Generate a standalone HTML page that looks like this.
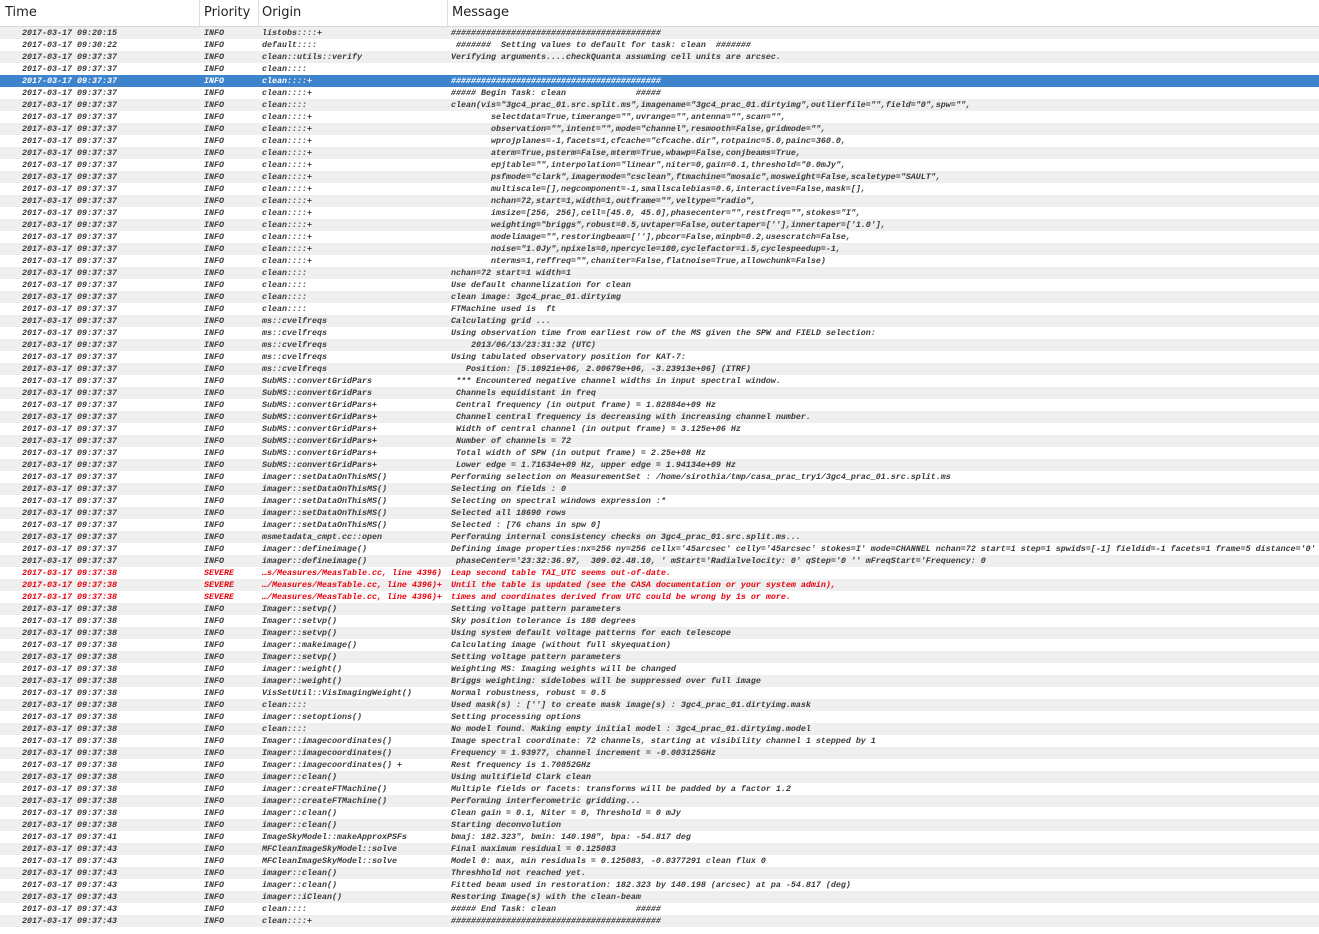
<!DOCTYPE html>
<html><head><meta charset="utf-8"><style>
body{margin:0;width:1319px;height:934px;background:#fff;overflow:hidden;font-family:"Liberation Mono",monospace;}
.h{height:26px;border-bottom:1px solid #d8d8d8;position:relative;font-family:"DejaVu Sans","Liberation Sans",sans-serif;font-size:13px;color:#222;background:#fff}
.h span{position:absolute;top:5px}
.h i{position:absolute;top:0;height:26px;width:1px;background:#ddd}
.r{height:12px;position:relative;font-size:8.33px;font-style:italic;font-weight:bold;line-height:12px;color:#3a3a3a;white-space:pre;overflow:hidden}
.r:nth-child(odd){background:#efefef}
.r span{position:absolute;top:0;overflow:hidden}
.r span:nth-child(1){left:22px}
.r span:nth-child(2){left:204px}
.r span:nth-child(3){left:262px;width:185px}
.r span:nth-child(4){left:451px}
.r.s{background:#3d84cd!important;color:#fff}
.r.e{color:#e8000b}
</style></head><body>
<div class="h"><span style="left:5px">Time</span><i style="left:199px"></i><span style="left:204px">Priority</span><i style="left:258px"></i><span style="left:262px">Origin</span><i style="left:447px"></i><span style="left:452px">Message</span></div>
<div id="t">
<div class="r"><span>2017-03-17 09:20:15</span><span>INFO</span><span>listobs::::+</span><span>##########################################</span></div>
<div class="r"><span>2017-03-17 09:30:22</span><span>INFO</span><span>default::::</span><span> #######  Setting values to default for task: clean  #######</span></div>
<div class="r"><span>2017-03-17 09:37:37</span><span>INFO</span><span>clean::utils::verify</span><span>Verifying arguments....checkQuanta assuming cell units are arcsec.</span></div>
<div class="r"><span>2017-03-17 09:37:37</span><span>INFO</span><span>clean::::</span><span></span></div>
<div class="r s"><span>2017-03-17 09:37:37</span><span>INFO</span><span>clean::::+</span><span>##########################################</span></div>
<div class="r"><span>2017-03-17 09:37:37</span><span>INFO</span><span>clean::::+</span><span>##### Begin Task: clean              #####</span></div>
<div class="r"><span>2017-03-17 09:37:37</span><span>INFO</span><span>clean::::</span><span>clean(vis="3gc4_prac_01.src.split.ms",imagename="3gc4_prac_01.dirtyimg",outlierfile="",field="0",spw="",</span></div>
<div class="r"><span>2017-03-17 09:37:37</span><span>INFO</span><span>clean::::+</span><span>        selectdata=True,timerange="",uvrange="",antenna="",scan="",</span></div>
<div class="r"><span>2017-03-17 09:37:37</span><span>INFO</span><span>clean::::+</span><span>        observation="",intent="",mode="channel",resmooth=False,gridmode="",</span></div>
<div class="r"><span>2017-03-17 09:37:37</span><span>INFO</span><span>clean::::+</span><span>        wprojplanes=-1,facets=1,cfcache="cfcache.dir",rotpainc=5.0,painc=360.0,</span></div>
<div class="r"><span>2017-03-17 09:37:37</span><span>INFO</span><span>clean::::+</span><span>        aterm=True,psterm=False,mterm=True,wbawp=False,conjbeams=True,</span></div>
<div class="r"><span>2017-03-17 09:37:37</span><span>INFO</span><span>clean::::+</span><span>        epjtable="",interpolation="linear",niter=0,gain=0.1,threshold="0.0mJy",</span></div>
<div class="r"><span>2017-03-17 09:37:37</span><span>INFO</span><span>clean::::+</span><span>        psfmode="clark",imagermode="csclean",ftmachine="mosaic",mosweight=False,scaletype="SAULT",</span></div>
<div class="r"><span>2017-03-17 09:37:37</span><span>INFO</span><span>clean::::+</span><span>        multiscale=[],negcomponent=-1,smallscalebias=0.6,interactive=False,mask=[],</span></div>
<div class="r"><span>2017-03-17 09:37:37</span><span>INFO</span><span>clean::::+</span><span>        nchan=72,start=1,width=1,outframe="",veltype="radio",</span></div>
<div class="r"><span>2017-03-17 09:37:37</span><span>INFO</span><span>clean::::+</span><span>        imsize=[256, 256],cell=[45.0, 45.0],phasecenter="",restfreq="",stokes="I",</span></div>
<div class="r"><span>2017-03-17 09:37:37</span><span>INFO</span><span>clean::::+</span><span>        weighting="briggs",robust=0.5,uvtaper=False,outertaper=[''],innertaper=['1.0'],</span></div>
<div class="r"><span>2017-03-17 09:37:37</span><span>INFO</span><span>clean::::+</span><span>        modelimage="",restoringbeam=[''],pbcor=False,minpb=0.2,usescratch=False,</span></div>
<div class="r"><span>2017-03-17 09:37:37</span><span>INFO</span><span>clean::::+</span><span>        noise="1.0Jy",npixels=0,npercycle=100,cyclefactor=1.5,cyclespeedup=-1,</span></div>
<div class="r"><span>2017-03-17 09:37:37</span><span>INFO</span><span>clean::::+</span><span>        nterms=1,reffreq="",chaniter=False,flatnoise=True,allowchunk=False)</span></div>
<div class="r"><span>2017-03-17 09:37:37</span><span>INFO</span><span>clean::::</span><span>nchan=72 start=1 width=1</span></div>
<div class="r"><span>2017-03-17 09:37:37</span><span>INFO</span><span>clean::::</span><span>Use default channelization for clean</span></div>
<div class="r"><span>2017-03-17 09:37:37</span><span>INFO</span><span>clean::::</span><span>clean image: 3gc4_prac_01.dirtyimg</span></div>
<div class="r"><span>2017-03-17 09:37:37</span><span>INFO</span><span>clean::::</span><span>FTMachine used is  ft</span></div>
<div class="r"><span>2017-03-17 09:37:37</span><span>INFO</span><span>ms::cvelfreqs</span><span>Calculating grid ...</span></div>
<div class="r"><span>2017-03-17 09:37:37</span><span>INFO</span><span>ms::cvelfreqs</span><span>Using observation time from earliest row of the MS given the SPW and FIELD selection:</span></div>
<div class="r"><span>2017-03-17 09:37:37</span><span>INFO</span><span>ms::cvelfreqs</span><span>    2013/06/13/23:31:32 (UTC)</span></div>
<div class="r"><span>2017-03-17 09:37:37</span><span>INFO</span><span>ms::cvelfreqs</span><span>Using tabulated observatory position for KAT-7:</span></div>
<div class="r"><span>2017-03-17 09:37:37</span><span>INFO</span><span>ms::cvelfreqs</span><span>   Position: [5.10921e+06, 2.00679e+06, -3.23913e+06] (ITRF)</span></div>
<div class="r"><span>2017-03-17 09:37:37</span><span>INFO</span><span>SubMS::convertGridPars</span><span> *** Encountered negative channel widths in input spectral window.</span></div>
<div class="r"><span>2017-03-17 09:37:37</span><span>INFO</span><span>SubMS::convertGridPars</span><span> Channels equidistant in freq</span></div>
<div class="r"><span>2017-03-17 09:37:37</span><span>INFO</span><span>SubMS::convertGridPars+</span><span> Central frequency (in output frame) = 1.82884e+09 Hz</span></div>
<div class="r"><span>2017-03-17 09:37:37</span><span>INFO</span><span>SubMS::convertGridPars+</span><span> Channel central frequency is decreasing with increasing channel number.</span></div>
<div class="r"><span>2017-03-17 09:37:37</span><span>INFO</span><span>SubMS::convertGridPars+</span><span> Width of central channel (in output frame) = 3.125e+06 Hz</span></div>
<div class="r"><span>2017-03-17 09:37:37</span><span>INFO</span><span>SubMS::convertGridPars+</span><span> Number of channels = 72</span></div>
<div class="r"><span>2017-03-17 09:37:37</span><span>INFO</span><span>SubMS::convertGridPars+</span><span> Total width of SPW (in output frame) = 2.25e+08 Hz</span></div>
<div class="r"><span>2017-03-17 09:37:37</span><span>INFO</span><span>SubMS::convertGridPars+</span><span> Lower edge = 1.71634e+09 Hz, upper edge = 1.94134e+09 Hz</span></div>
<div class="r"><span>2017-03-17 09:37:37</span><span>INFO</span><span>imager::setDataOnThisMS()</span><span>Performing selection on MeasurementSet : /home/sirothia/tmp/casa_prac_try1/3gc4_prac_01.src.split.ms</span></div>
<div class="r"><span>2017-03-17 09:37:37</span><span>INFO</span><span>imager::setDataOnThisMS()</span><span>Selecting on fields : 0</span></div>
<div class="r"><span>2017-03-17 09:37:37</span><span>INFO</span><span>imager::setDataOnThisMS()</span><span>Selecting on spectral windows expression :*</span></div>
<div class="r"><span>2017-03-17 09:37:37</span><span>INFO</span><span>imager::setDataOnThisMS()</span><span>Selected all 18690 rows</span></div>
<div class="r"><span>2017-03-17 09:37:37</span><span>INFO</span><span>imager::setDataOnThisMS()</span><span>Selected : [76 chans in spw 0]</span></div>
<div class="r"><span>2017-03-17 09:37:37</span><span>INFO</span><span>msmetadata_cmpt.cc::open</span><span>Performing internal consistency checks on 3gc4_prac_01.src.split.ms...</span></div>
<div class="r"><span>2017-03-17 09:37:37</span><span>INFO</span><span>imager::defineimage()</span><span>Defining image properties:nx=256 ny=256 cellx='45arcsec' celly='45arcsec' stokes=I' mode=CHANNEL nchan=72 start=1 step=1 spwids=[-1] fieldid=-1 facets=1 frame=5 distance='0'</span></div>
<div class="r"><span>2017-03-17 09:37:37</span><span>INFO</span><span>imager::defineimage()</span><span> phaseCenter='23:32:36.97,  309.02.48.10, ' mStart='Radialvelocity: 0' qStep='0 '' mFreqStart='Frequency: 0</span></div>
<div class="r e"><span>2017-03-17 09:37:38</span><span>SEVERE</span><span>…s/Measures/MeasTable.cc, line 4396)</span><span>Leap second table TAI_UTC seems out-of-date.</span></div>
<div class="r e"><span>2017-03-17 09:37:38</span><span>SEVERE</span><span>…/Measures/MeasTable.cc, line 4396)+</span><span>Until the table is updated (see the CASA documentation or your system admin),</span></div>
<div class="r e"><span>2017-03-17 09:37:38</span><span>SEVERE</span><span>…/Measures/MeasTable.cc, line 4396)+</span><span>times and coordinates derived from UTC could be wrong by 1s or more.</span></div>
<div class="r"><span>2017-03-17 09:37:38</span><span>INFO</span><span>Imager::setvp()</span><span>Setting voltage pattern parameters</span></div>
<div class="r"><span>2017-03-17 09:37:38</span><span>INFO</span><span>Imager::setvp()</span><span>Sky position tolerance is 180 degrees</span></div>
<div class="r"><span>2017-03-17 09:37:38</span><span>INFO</span><span>Imager::setvp()</span><span>Using system default voltage patterns for each telescope</span></div>
<div class="r"><span>2017-03-17 09:37:38</span><span>INFO</span><span>imager::makeimage()</span><span>Calculating image (without full skyequation)</span></div>
<div class="r"><span>2017-03-17 09:37:38</span><span>INFO</span><span>Imager::setvp()</span><span>Setting voltage pattern parameters</span></div>
<div class="r"><span>2017-03-17 09:37:38</span><span>INFO</span><span>imager::weight()</span><span>Weighting MS: Imaging weights will be changed</span></div>
<div class="r"><span>2017-03-17 09:37:38</span><span>INFO</span><span>imager::weight()</span><span>Briggs weighting: sidelobes will be suppressed over full image</span></div>
<div class="r"><span>2017-03-17 09:37:38</span><span>INFO</span><span>VisSetUtil::VisImagingWeight()</span><span>Normal robustness, robust = 0.5</span></div>
<div class="r"><span>2017-03-17 09:37:38</span><span>INFO</span><span>clean::::</span><span>Used mask(s) : [''] to create mask image(s) : 3gc4_prac_01.dirtyimg.mask</span></div>
<div class="r"><span>2017-03-17 09:37:38</span><span>INFO</span><span>imager::setoptions()</span><span>Setting processing options</span></div>
<div class="r"><span>2017-03-17 09:37:38</span><span>INFO</span><span>clean::::</span><span>No model found. Making empty initial model : 3gc4_prac_01.dirtyimg.model</span></div>
<div class="r"><span>2017-03-17 09:37:38</span><span>INFO</span><span>Imager::imagecoordinates()</span><span>Image spectral coordinate: 72 channels, starting at visibility channel 1 stepped by 1</span></div>
<div class="r"><span>2017-03-17 09:37:38</span><span>INFO</span><span>Imager::imagecoordinates()</span><span>Frequency = 1.93977, channel increment = -0.003125GHz</span></div>
<div class="r"><span>2017-03-17 09:37:38</span><span>INFO</span><span>Imager::imagecoordinates() +</span><span>Rest frequency is 1.70852GHz</span></div>
<div class="r"><span>2017-03-17 09:37:38</span><span>INFO</span><span>imager::clean()</span><span>Using multifield Clark clean</span></div>
<div class="r"><span>2017-03-17 09:37:38</span><span>INFO</span><span>imager::createFTMachine()</span><span>Multiple fields or facets: transforms will be padded by a factor 1.2</span></div>
<div class="r"><span>2017-03-17 09:37:38</span><span>INFO</span><span>imager::createFTMachine()</span><span>Performing interferometric gridding...</span></div>
<div class="r"><span>2017-03-17 09:37:38</span><span>INFO</span><span>imager::clean()</span><span>Clean gain = 0.1, Niter = 0, Threshold = 0 mJy</span></div>
<div class="r"><span>2017-03-17 09:37:38</span><span>INFO</span><span>imager::clean()</span><span>Starting deconvolution</span></div>
<div class="r"><span>2017-03-17 09:37:41</span><span>INFO</span><span>ImageSkyModel::makeApproxPSFs</span><span>bmaj: 182.323", bmin: 140.198", bpa: -54.817 deg</span></div>
<div class="r"><span>2017-03-17 09:37:43</span><span>INFO</span><span>MFCleanImageSkyModel::solve</span><span>Final maximum residual = 0.125083</span></div>
<div class="r"><span>2017-03-17 09:37:43</span><span>INFO</span><span>MFCleanImageSkyModel::solve</span><span>Model 0: max, min residuals = 0.125083, -0.0377291 clean flux 0</span></div>
<div class="r"><span>2017-03-17 09:37:43</span><span>INFO</span><span>imager::clean()</span><span>Threshhold not reached yet.</span></div>
<div class="r"><span>2017-03-17 09:37:43</span><span>INFO</span><span>imager::clean()</span><span>Fitted beam used in restoration: 182.323 by 140.198 (arcsec) at pa -54.817 (deg)</span></div>
<div class="r"><span>2017-03-17 09:37:43</span><span>INFO</span><span>imager::iClean()</span><span>Restoring Image(s) with the clean-beam</span></div>
<div class="r"><span>2017-03-17 09:37:43</span><span>INFO</span><span>clean::::</span><span>##### End Task: clean                #####</span></div>
<div class="r"><span>2017-03-17 09:37:43</span><span>INFO</span><span>clean::::+</span><span>##########################################</span></div>
</div>
</body></html>
